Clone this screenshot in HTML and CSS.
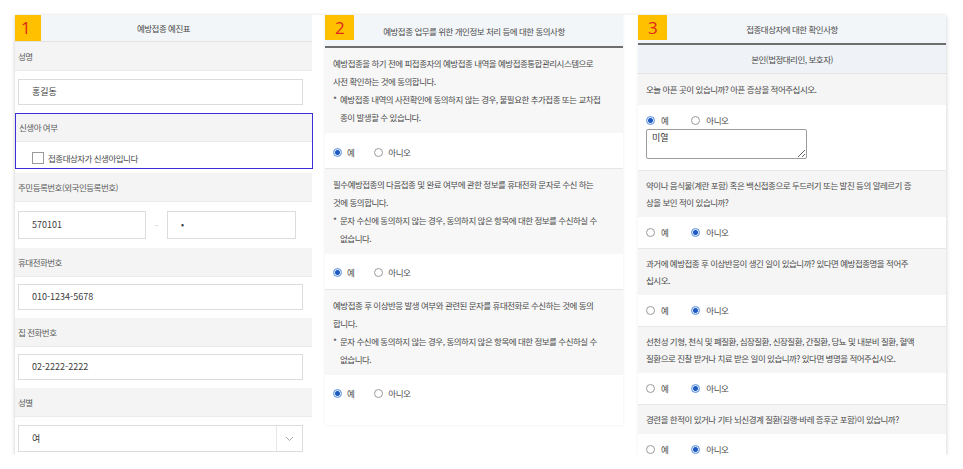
FILE: index.html
```html
<!DOCTYPE html>
<html lang="ko">
<head>
<meta charset="utf-8">
<title>예방접종 예진표</title>
<link rel="stylesheet" href="styles.css">
</head>
<body>
<div class="sheet">

  <section class="panel panel-form">
    <header class="panel-head head-form">
      <span class="badge">1</span>
      <h2 class="panel-title">예방접종 예진표</h2>
    </header>

    <div class="field-label">성명</div>
    <div class="field-row row-first"><div class="input">홍길동</div></div>

    <div class="field-group focused">
      <div class="field-label">신생아 여부</div>
      <div class="check-row"><span class="checkbox"></span><span>접종대상자가 신생아입니다</span></div>
    </div>

    <div class="field-label">주민등록번호(외국인등록번호)</div>
    <div class="field-row rrn-row">
      <div class="input rrn-a">570101</div>
      <span class="dash">-</span>
      <div class="input rrn-b">•</div>
    </div>

    <div class="field-label">휴대전화번호</div>
    <div class="field-row"><div class="input">010-1234-5678</div></div>

    <div class="field-label">집 전화번호</div>
    <div class="field-row"><div class="input">02-2222-2222</div></div>

    <div class="field-label">성별</div>
    <div class="field-row row-select">
      <div class="select">
        <span class="select-value">여</span>
        <span class="select-arrow"><svg width="9" height="6" viewBox="0 0 9 6"><polyline points="1,1 4.5,4.5 8,1" fill="none" stroke="#a8a8a8" stroke-width="1"/></svg></span>
      </div>
    </div>
  </section>

  <section class="panel panel-consent">
    <header class="panel-head head-consent">
      <span class="badge">2</span>
      <h2 class="panel-title">예방접종 업무를 위한 개인정보 처리 등에 대한 동의사항</h2>
    </header>

    <div class="consent-text">
      <p>예방접종을 하기 전에 피접종자의 예방접종 내역을 예방접종통합관리시스템으로<br>사전 확인하는 것에 동의합니다.</p>
      <p class="note"><span class="mark">*</span><span>예방접종 내역의 사전확인에 동의하지 않는 경우, 불필요한 추가접종 또는 교차접<br>종이 발생할 수 있습니다.</span></p>
    </div>
    <div class="answer answer-top">
      <span class="option"><span class="radio on"></span>예</span>
      <span class="option"><span class="radio"></span>아니오</span>
    </div>

    <div class="consent-text">
      <p>필수예방접종의 다음접종 및 완료 여부에 관한 정보를 휴대전화 문자로 수신 하는<br>것에 동의합니다.</p>
      <p class="note"><span class="mark">*</span><span>문자 수신에 동의하지 않는 경우, 동의하지 않은 항목에 대한 정보를 수신하실 수<br>없습니다.</span></p>
    </div>
    <div class="answer">
      <span class="option"><span class="radio on"></span>예</span>
      <span class="option"><span class="radio"></span>아니오</span>
    </div>

    <div class="consent-text">
      <p>예방접종 후 이상반응 발생 여부와 관련된 문자를 휴대전화로 수신하는 것에 동의<br>합니다.</p>
      <p class="note"><span class="mark">*</span><span>문자 수신에 동의하지 않는 경우, 동의하지 않은 항목에 대한 정보를 수신하실 수<br>없습니다.</span></p>
    </div>
    <div class="answer">
      <span class="option"><span class="radio on"></span>예</span>
      <span class="option"><span class="radio"></span>아니오</span>
    </div>
  </section>

  <section class="panel panel-check">
    <header class="panel-head head-check">
      <span class="badge">3</span>
      <h2 class="panel-title">접종대상자에 대한 확인사항</h2>
    </header>
    <div class="subhead">본인(법정대리인, 보호자)</div>

    <div class="question q-first">오늘 아픈 곳이 있습니까? 아픈 증상을 적어주십시오.</div>
    <div class="answer-first">
      <div class="options">
        <span class="option"><span class="radio on"></span>예</span>
        <span class="option"><span class="radio"></span>아니오</span>
      </div>
      <textarea class="memo" readonly>미열</textarea>
    </div>

    <div class="question">약이나 음식물(계란 포함) 혹은 백신접종으로 두드러기 또는 발진 등의 알레르기 증<br>상을 보인 적이 있습니까?</div>
    <div class="answer-check">
      <span class="option"><span class="radio"></span>예</span>
      <span class="option"><span class="radio on"></span>아니오</span>
    </div>

    <div class="question">과거에 예방접종 후 이상반응이 생긴 일이 있습니까? 있다면 예방접종명을 적어주<br>십시오.</div>
    <div class="answer-check">
      <span class="option"><span class="radio"></span>예</span>
      <span class="option"><span class="radio on"></span>아니오</span>
    </div>

    <div class="question">선천성 기형, 천식 및 폐질환, 심장질환, 신장질환, 간질환, 당뇨 및 내분비 질환, 혈액<br>질환으로 진찰 받거나 치료 받은 일이 있습니까? 있다면 병명을 적어주십시오.</div>
    <div class="answer-check">
      <span class="option"><span class="radio"></span>예</span>
      <span class="option"><span class="radio on"></span>아니오</span>
    </div>

    <div class="question">경련을 한적이 있거나 기타 뇌신경계 질환(길랭-바레 증후군 포함)이 있습니까?</div>
    <div class="answer-check">
      <span class="option"><span class="radio"></span>예</span>
      <span class="option"><span class="radio on"></span>아니오</span>
    </div>
  </section>

</div>
</body>
</html>
```

FILE: styles.css
```css
* {
  box-sizing: border-box;
  margin: 0;
  padding: 0;
}

html, body {
  background: #fff;
}

body {
  font-family: "Noto Sans CJK KR", "Noto Sans", sans-serif;
  font-size: 8.5px;
  letter-spacing: -0.5px;
  color: #4a4a4a;
}

.sheet {
  margin: 15px 0 0 15px;
  width: 931px;
  height: 440px;
  display: flex;
  align-items: flex-start;
  background: #fff;
  overflow: hidden;
  box-shadow: 0 1px 4px rgba(0, 0, 0, 0.22);
}

.panel {
  display: flex;
  flex-direction: column;
  flex: none;
  background: #fff;
}

.panel-form {
  width: 297px;
  margin-right: 13px;
}

.panel-consent {
  width: 298px;
  height: 410px;
  margin-right: 15px;
  box-shadow: 0 0 3px rgba(0, 0, 0, 0.08);
}

.panel-check {
  width: 308px;
  box-shadow: 0 0 3px rgba(0, 0, 0, 0.08);
}

/* ---------- headers ---------- */
.panel-head {
  display: grid;
  grid-template-columns: 1fr auto 1fr;
  align-items: center;
  background: #f3f6f9;
}

.badge {
  grid-column: 1;
  justify-self: start;
  align-self: start;
  width: 29px;
  height: 25px;
  padding-left: 10px;
  background: #ffc000;
  color: #e0281a;
  font-family: "Open Sans", "Noto Sans", sans-serif;
  font-size: 17px;
  letter-spacing: 0;
  line-height: 25px;
}

.panel-title {
  grid-column: 2;
  font-size: 8.5px;
  font-weight: normal;
  color: #4a4a4a;
  white-space: nowrap;
}

.head-form {
  height: 27px;
  border-bottom: 1px solid #e3e3e3;
}

.head-form .badge {
  width: 26px;
  height: 26px;
  padding-left: 6px;
  line-height: 26px;
}

.head-consent {
  height: 33px;
  border-bottom: 2px solid #6e6e6e;
}

.head-check {
  height: 30px;
  border-bottom: 2px solid #6e6e6e;
}

/* ---------- panel 1 : form ---------- */
.field-label {
  height: 29px;
  line-height: 28px;
  padding-left: 3px;
  background: #f4f4f4;
  border-bottom: 1px solid #ebebeb;
  color: #5a5a5a;
}

.field-row {
  display: flex;
  align-items: center;
  padding: 7px 9px 8px 3px;
}

.row-first {
  padding-top: 8px;
}

.input {
  flex: 1;
  height: 26px;
  padding-left: 13px;
  border: 1px solid #dcdcdc;
  background: #fff;
  font-size: 9px;
  letter-spacing: 0;
  line-height: 24px;
  color: #3c3c3c;
}

.field-group.focused {
  width: 298px;
  margin-bottom: 4px;
  border: 1px solid #3b30d6;
}

.focused .field-label {
  height: 28px;
  line-height: 27px;
}

.check-row {
  height: 26px;
  display: flex;
  align-items: center;
  gap: 4px;
  padding: 5px 0 0 16px;
}

.checkbox {
  width: 12px;
  height: 12px;
  border: 1px solid #9a9a9a;
  background: #fff;
}

.rrn-row {
  padding: 9px 16px 9px 3px;
}

.rrn-row .input {
  flex: none;
  height: 28px;
  line-height: 26px;
}

.rrn-a {
  width: 128px;
}

.rrn-b {
  width: 129px;
}

.dash {
  width: 21px;
  text-align: center;
  color: #bbb;
}

.row-select {
  padding-top: 8px;
}

.select {
  flex: 1;
  display: flex;
  height: 27px;
  border: 1px solid #dcdcdc;
  background: #fff;
}

.select-value {
  flex: 1;
  padding-left: 13px;
  font-size: 9px;
  line-height: 25px;
  color: #3c3c3c;
}

.select-arrow {
  width: 26px;
  display: flex;
  align-items: center;
  justify-content: center;
  border-left: 1px solid #e6e6e6;
}

/* ---------- panel 2 : consent ---------- */
.consent-text {
  background: #f7f7f7;
  padding: 6px 8px 7px;
  line-height: 18px;
  white-space: nowrap;
  border-top: 1px solid #e6e6e6;
}

.head-consent + .consent-text {
  border-top: 0;
}

.note {
  display: flex;
}

.mark {
  width: 7px;
  flex: none;
}

.answer {
  display: flex;
  align-items: center;
  height: 35px;
  padding: 2px 8px 0;
}

.answer-top {
  padding-top: 4px;
}

.option {
  display: flex;
  align-items: center;
  gap: 5px;
  margin-right: 20px;
  line-height: 11px;
}

.radio {
  width: 9px;
  height: 9px;
  border: 1px solid #9a9a9a;
  border-radius: 50%;
  background: #fff;
}

.radio.on {
  border-color: #5f93dc;
  background: radial-gradient(circle, #1d5ac2 0 2.1px, #d6e5f9 2.7px);
}

/* ---------- panel 3 : check ---------- */
.subhead {
  height: 29px;
  line-height: 28px;
  text-align: center;
  background: #eff3f7;
  border-bottom: 1px solid #e2e2e2;
}

.question {
  background: #f5f5f5;
  padding: 6px 8px;
  line-height: 17px;
  white-space: nowrap;
  border-top: 1px solid #e8e8e8;
}

.question.q-first {
  padding: 7px 8px;
  border-top: 0;
}

.answer-first {
  display: flex;
  flex-direction: column;
  align-items: flex-start;
  gap: 3px;
  padding: 10px 8px 11px;
}

.options {
  display: flex;
  height: 11px;
}

.panel-check .option {
  margin-right: 23px;
  gap: 6px;
}

.memo {
  width: 161px;
  height: 30px;
  padding: 2px 5px;
  border: 1px solid #9c9c9c;
  border-radius: 2px;
  font-family: "Noto Sans CJK KR", sans-serif;
  font-size: 9px;
  letter-spacing: 0;
  line-height: 12px;
  color: #333;
  background: #fff;
  outline: none;
}

.answer-check {
  display: flex;
  align-items: center;
  height: 31px;
  padding: 0 8px;
}
```
